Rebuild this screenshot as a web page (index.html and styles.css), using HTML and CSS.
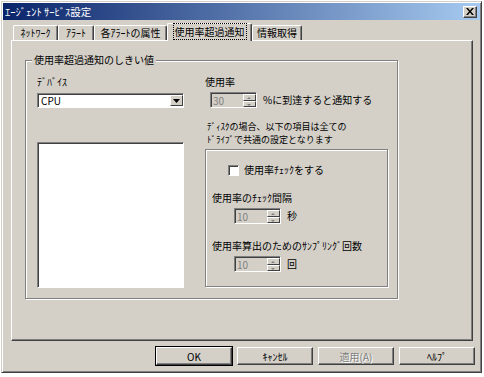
FILE: index.html
```html
<!DOCTYPE html>
<html lang="ja">
<head>
    <meta charset="UTF-8">
    <title>ｴｰｼﾞｪﾝﾄ ｻｰﾋﾞｽ設定</title>
    <link rel="stylesheet" href="styles.css">
</head>
<body>
    <div class="window">
        <div class="titlebar">
            <span class="title">ｴｰｼﾞｪﾝﾄ ｻｰﾋﾞｽ設定</span>
            <button class="close-btn" aria-label="閉じる">
                <svg width="8" height="7" viewBox="0 0 8 7"><path d="M0 0h2l2 2.5L6 0h2L5 3.5 8 7H6L4 4.5 2 7H0l3-3.5z" fill="#000"/></svg>
            </button>
        </div>

        <div class="tabs">
            <div class="tab">ﾈｯﾄﾜｰｸ</div>
            <div class="tab">ｱﾗｰﾄ</div>
            <div class="tab">各ｱﾗｰﾄの属性</div>
            <div class="tab selected"><span class="focus">使用率超過通知</span></div>
            <div class="tab">情報取得</div>
        </div>

        <div class="panel">
            <div class="group">
                <div class="group-title">使用率超過通知のしきい値</div>
                <div class="columns">
                    <div class="col-left">
                        <div class="label">ﾃﾞﾊﾞｲｽ</div>
                        <div class="combo">
                            <span class="combo-text">CPU</span>
                            <span class="combo-btn"><svg width="7" height="4" viewBox="0 0 7 4"><path d="M0 0h7L3.5 4z" fill="#000"/></svg></span>
                        </div>
                        <div class="listbox"></div>
                    </div>
                    <div class="col-right">
                        <div class="label">使用率</div>
                        <div class="spin-row first">
                            <div class="spin">
                                <span class="spin-text">30</span>
                                <span class="spin-btns"><span class="spin-up"></span><span class="spin-down"></span></span>
                            </div>
                            <span class="unit">%に到達すると通知する</span>
                        </div>
                        <div class="note">ﾃﾞｨｽｸの場合、以下の項目は全ての<br>ﾄﾞﾗｲﾌﾞで共通の設定となります</div>
                        <div class="inner">
                            <label class="check-row"><span class="checkbox"></span>使用率ﾁｪｯｸをする</label>
                            <div class="label sub">使用率のﾁｪｯｸ間隔</div>
                            <div class="spin-row">
                                <div class="spin">
                                    <span class="spin-text">10</span>
                                    <span class="spin-btns"><span class="spin-up"></span><span class="spin-down"></span></span>
                                </div>
                                <span class="unit">秒</span>
                            </div>
                            <div class="label sub">使用率算出のためのｻﾝﾌﾟﾘﾝｸﾞ回数</div>
                            <div class="spin-row">
                                <div class="spin">
                                    <span class="spin-text">10</span>
                                    <span class="spin-btns"><span class="spin-up"></span><span class="spin-down"></span></span>
                                </div>
                                <span class="unit">回</span>
                            </div>
                        </div>
                    </div>
                </div>
            </div>
        </div>

        <div class="buttons">
            <button class="btn default">OK</button>
            <button class="btn">ｷｬﾝｾﾙ</button>
            <button class="btn disabled">適用(A)</button>
            <button class="btn">ﾍﾙﾌﾟ</button>
        </div>
    </div>
</body>
</html>
```

FILE: styles.css
```css
body {
    margin: 0;
    background: #fff;
    font-family: "Noto Sans CJK JP", "Liberation Sans", sans-serif;
    font-size: 10px;
    line-height: 12px;
    color: #000;
}
.window {
    margin: 1px 0 0 1px;
    width: 481px;
    height: 372px;
    box-sizing: border-box;
    background: #d4d0c8;
    border: 1px solid;
    border-color: #d4d0c8 #404040 #404040 #d4d0c8;
    box-shadow: inset 1px 1px 0 #fff, inset -1px -1px 0 #808080;
    padding: 1px;
}
.titlebar {
    height: 17px;
    display: flex;
    align-items: center;
    justify-content: space-between;
    padding: 0 3px 0 2px;
    background: linear-gradient(to right, #0a246a, #a6caf0);
}
.title {
    color: #fff;
    font-size: 10.5px;
}
.close-btn {
    width: 14px;
    height: 12px;
    padding: 0;
    display: flex;
    align-items: center;
    justify-content: center;
    background: #d4d0c8;
    border: 1px solid;
    border-color: #fff #404040 #404040 #fff;
    box-shadow: inset -1px -1px 0 #808080;
}
.tabs {
    display: flex;
    align-items: flex-end;
    height: 17px;
    margin-top: 3px;
    padding-left: 10px;
    position: relative;
    z-index: 1;
}
.tab {
    height: 15px;
    box-sizing: border-box;
    border-top: 1px solid #fff;
    border-left: 1px solid #fff;
    border-right: 1px solid #404040;
    border-radius: 2px 2px 0 0;
    box-shadow: inset -1px 0 0 #808080;
    text-align: center;
    line-height: 13px;
}
.tab:nth-child(1) { width: 45px; }
.tab:nth-child(2) { width: 36px; }
.tab:nth-child(3) { width: 73px; }
.tab:nth-child(5) { width: 50px; }
.tab.selected {
    width: 85px;
    height: 18px;
    margin-bottom: -1px;
    background: #d4d0c8;
    line-height: 15px;
}
.focus {
    outline: 1px dotted #000;
    padding: 0 1px;
}
.panel {
    margin-left: 8px;
    width: 462px;
    height: 301px;
    box-sizing: border-box;
    border: 1px solid;
    border-color: #fff #404040 #404040 #fff;
    box-shadow: inset -1px -1px 0 #808080;
    padding: 19px 0 0 13px;
}
.group {
    width: 373px;
    height: 239px;
    box-sizing: border-box;
    border: 1px solid #808080;
    box-shadow: 1px 1px 0 #fff, inset 1px 1px 0 #fff;
    padding: 0 0 0 11px;
}
.group-title {
    display: table;
    margin: -7px 0 0 -5px;
    padding: 0 2px;
    background: #d4d0c8;
    font-size: 10px;
}
.columns {
    display: grid;
    grid-template-columns: 147px 184px;
    column-gap: 21px;
    margin-top: 10px;
}
.combo {
    margin-top: 5px;
    height: 15px;
    box-sizing: border-box;
    display: flex;
    justify-content: space-between;
    background: #fff;
    border: 1px solid;
    border-color: #808080 #fff #fff #808080;
    box-shadow: inset 1px 1px 0 #404040;
}
.combo-text {
    padding: 0 3px;
    line-height: 13px;
}
.combo-btn {
    width: 13px;
    display: flex;
    align-items: center;
    justify-content: center;
    background: #d4d0c8;
    border: 1px solid;
    border-color: #fff #404040 #404040 #fff;
    box-sizing: border-box;
    margin: 1px 0 1px 0;
}
.listbox {
    margin-top: 34px;
    height: 146px;
    box-sizing: border-box;
    background: #fff;
    border: 1px solid;
    border-color: #808080 #fff #fff #808080;
    box-shadow: inset 1px 1px 0 #404040;
}
.spin-row {
    display: flex;
    align-items: center;
    margin-top: 4px;
}
.spin-row.first .spin {
    margin-left: 5px;
}
.spin {
    width: 47px;
    height: 16px;
    box-sizing: border-box;
    display: flex;
    border: 1px solid;
    border-color: #808080 #fff #fff #808080;
    box-shadow: inset 1px 1px 0 #404040;
    padding: 1px 0 0 1px;
}
.spin-text {
    flex: 1;
    color: #808080;
    padding-left: 1px;
    line-height: 13px;
}
.spin-btns {
    width: 13px;
    display: flex;
    flex-direction: column;
}
.spin-up, .spin-down {
    flex: 1;
    box-sizing: border-box;
    border: 1px solid;
    border-color: #fff #404040 #404040 #fff;
    position: relative;
}
.spin-up::after, .spin-down::after {
    content: "";
    position: absolute;
    left: 3px;
    top: 2px;
    border-left: 2px solid transparent;
    border-right: 2px solid transparent;
}
.spin-up::after { border-bottom: 2px solid #808080; }
.spin-down::after { border-top: 2px solid #808080; }
.unit {
    margin-left: 6px;
}
.note {
    margin-top: 12px;
    padding-left: 2px;
    line-height: 13px;
    font-size: 9px;
}
.inner {
    margin-top: 3px;
    width: 183px;
    height: 138px;
    box-sizing: border-box;
    border: 1px solid #808080;
    box-shadow: 1px 1px 0 #fff, inset 1px 1px 0 #fff;
    padding: 14px 0 0 6px;
}
.inner .spin-row {
    margin-left: 22px;
}
.check-row {
    display: flex;
    align-items: center;
    margin-left: 16px;
}
.checkbox {
    width: 11px;
    height: 11px;
    box-sizing: border-box;
    margin-right: 5px;
    background: #fff;
    border: 1px solid;
    border-color: #808080 #fff #fff #808080;
    box-shadow: inset 1px 1px 0 #404040;
}
.label.sub {
    margin-top: 16px;
}
.buttons {
    display: flex;
    justify-content: flex-end;
    gap: 5px;
    margin-top: 6px;
    padding-right: 5px;
}
.btn {
    width: 76px;
    height: 18px;
    padding: 0;
    font-family: inherit;
    font-size: 10px;
    background: #d4d0c8;
    border: 1px solid;
    border-color: #fff #404040 #404040 #fff;
    box-shadow: inset -1px -1px 0 #808080;
}
.btn.default {
    outline: 1px solid #000;
    outline-offset: 0;
}
.btn.disabled {
    color: #808080;
    text-shadow: 1px 1px 0 #fff;
}
```
